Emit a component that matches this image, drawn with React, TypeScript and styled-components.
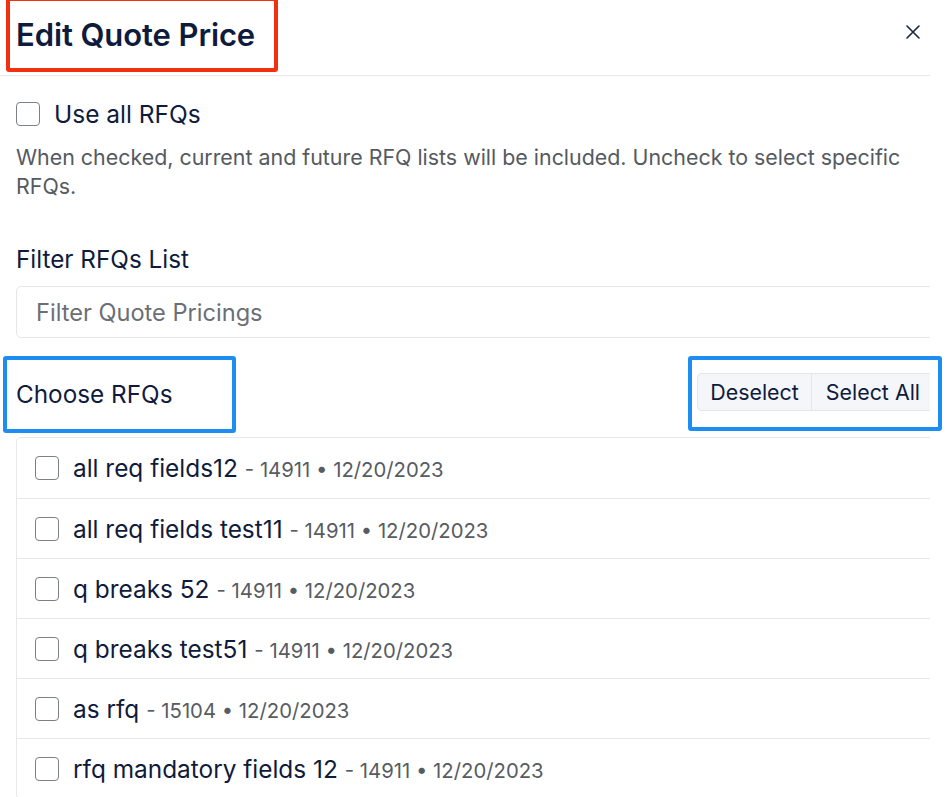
import React from "react";
import styled, { createGlobalStyle } from "styled-components";

const GlobalStyle = createGlobalStyle`
  html, body {
    margin: 0;
    padding: 0;
    background: #ffffff;
  }
  body {
    font-family: Inter, "Noto Sans", "Liberation Sans", sans-serif;
    color: #0f1b3d;
  }
`;

const Page = styled.div`
  position: relative;
  width: 946px;
  height: 797px;
  overflow: hidden;
  background: #ffffff;
`;

const Sheet = styled.div`
  width: 930px;
  height: 797px;
  overflow: hidden;
`;

const Modal = styled.div`
  width: 950px;
`;

const Header = styled.div`
  display: flex;
  align-items: center;
  justify-content: space-between;
  height: 76px;
  padding: 0 26px 0 16px;
  border-bottom: 1px solid #e6e8ec;
  box-sizing: border-box;
`;

const Title = styled.h2`
  margin: -7px 0 0 0;
  font-size: 31px;
  font-weight: 600;
  letter-spacing: -0.1px;
  color: #0f1b3d;
`;

const CloseButton = styled.button`
  border: none;
  background: transparent;
  padding: 0;
  width: 20px;
  height: 20px;
  display: flex;
  align-items: center;
  justify-content: center;
  margin: -12px 1px 0 0;
  cursor: pointer;
`;

const Body = styled.div`
  padding: 23px 16px 0 16px;
`;

const CheckRow = styled.label`
  display: flex;
  align-items: center;
  gap: 14px;
  font-size: 24.5px;
  color: #0f1b3d;
`;

const Box = styled.span<{ size: number }>`
  display: inline-block;
  width: ${(p) => p.size}px;
  height: ${(p) => p.size}px;
  border: 1.5px solid #7b7f86;
  border-radius: 4px;
  box-sizing: border-box;
  background: #ffffff;
  flex-shrink: 0;
`;

const Help = styled.p`
  margin: 14px 0 0 0;
  font-size: 21.4px;
  line-height: 29px;
  color: #555a61;
  padding-right: 20px;
`;

const FieldLabel = styled.div`
  margin-top: 44px;
  font-size: 24.3px;
  line-height: 28px;
  color: #0f1b3d;
`;

const FilterInput = styled.input`
  display: block;
  width: 100%;
  height: 52px;
  margin-top: 13px;
  box-sizing: border-box;
  border: 1px solid #e4e6ea;
  border-radius: 5px;
  padding: 0 19px;
  font-family: inherit;
  font-size: 23.6px;
  color: #0f1b3d;
  outline: none;
  &::placeholder {
    color: #6b6f75;
  }
`;

const SectionRow = styled.div`
  display: flex;
  align-items: center;
  justify-content: space-between;
  height: 99px;
`;

const SectionTitle = styled.div`
  font-size: 24.3px;
  color: #0f1b3d;
  margin-top: 12px;
`;

const ButtonGroup = styled.div`
  display: flex;
  margin-top: 9px;
  border: 1px solid #e4e6ea;
  border-radius: 4px;
  background: #f5f6fa;
`;

const GroupButton = styled.button`
  border: none;
  background: transparent;
  font-family: inherit;
  font-size: 21.4px;
  color: #0f1b3d;
  height: 36px;
  padding: 0 12px;
  & + & {
    border-left: 1px solid #e4e6ea;
    padding: 0 13px 0 14px;
  }
`;

const List = styled.div`
  border: 1px solid #e6e8ec;
  border-radius: 5px;
`;

const Item = styled.label`
  display: flex;
  align-items: center;
  gap: 14px;
  height: 60px;
  padding: 0 18px;
  box-sizing: border-box;
  & + & {
    border-top: 1px solid #e6e8ec;
  }
`;

const Name = styled.span`
  font-size: 24.4px;
  color: #0f1b3d;
`;

const Meta = styled.span`
  font-size: 20.3px;
  color: #575b62;
  margin-left: 7px;
`;

const Mark = styled.div<{ tone: string }>`
  position: absolute;
  border: 4px solid ${(p) => p.tone};
  border-radius: 3px;
  box-sizing: border-box;
  pointer-events: none;
`;

const rfqs = [
  { name: "all req fields12", id: "14911", date: "12/20/2023" },
  { name: "all req fields test11", id: "14911", date: "12/20/2023" },
  { name: "q breaks 52", id: "14911", date: "12/20/2023" },
  { name: "q breaks test51", id: "14911", date: "12/20/2023" },
  { name: "as rfq", id: "15104", date: "12/20/2023" },
  { name: "rfq mandatory fields 12", id: "14911", date: "12/20/2023" },
];

const App: React.FC = () => {
  return (
    <Page>
      <GlobalStyle />
      <Sheet>
        <Modal>
          <Header>
            <Title>Edit Quote Price</Title>
            <CloseButton aria-label="Close">
              <svg width="16" height="16" viewBox="0 0 16 16">
                <path
                  d="M2 2 L14 14 M14 2 L2 14"
                  stroke="#1b2440"
                  strokeWidth="1.6"
                  strokeLinecap="round"
                />
              </svg>
            </CloseButton>
          </Header>
          <Body>
            <CheckRow>
              <Box size={24} />
              Use all RFQs
            </CheckRow>
            <Help>
              When checked, current and future RFQ lists will be included. Uncheck to select
              specific RFQs.
            </Help>
            <FieldLabel>Filter RFQs List</FieldLabel>
            <FilterInput placeholder="Filter Quote Pricings" />
            <SectionRow>
              <SectionTitle>Choose RFQs</SectionTitle>
              <ButtonGroup>
                <GroupButton>Deselect</GroupButton>
                <GroupButton>Select All</GroupButton>
              </ButtonGroup>
            </SectionRow>
            <List>
              {rfqs.map((r) => (
                <Item key={r.name}>
                  <Box size={24} />
                  <span>
                    <Name>{r.name}</Name>
                    <Meta>
                      - {r.id} • {r.date}
                    </Meta>
                  </span>
                </Item>
              ))}
            </List>
          </Body>
        </Modal>
      </Sheet>
      <Mark tone="#f2300f" style={{ left: 6, top: -3, width: 272, height: 75 }} />
      <Mark tone="#1e8df2" style={{ left: 3, top: 356, width: 233, height: 77 }} />
      <Mark tone="#1e8df2" style={{ left: 688, top: 356, width: 254, height: 75 }} />
    </Page>
  );
};

export default App;
